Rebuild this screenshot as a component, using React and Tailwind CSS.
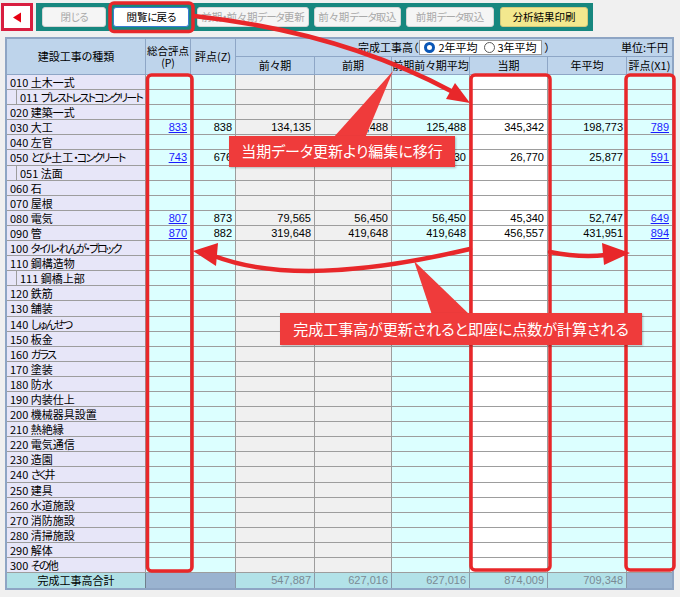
import React from "react";

const rows = [
  ["010", "土木一式"],
  ["011", "プレストレストコンクリート", true],
  ["020", "建築一式"],
  ["030", "大工"],
  ["040", "左官"],
  ["050", "とび・土工・コンクリート"],
  ["051", "法面", true],
  ["060", "石"],
  ["070", "屋根"],
  ["080", "電気"],
  ["090", "管"],
  ["100", "タイル・れんが・ブロック"],
  ["110", "鋼構造物"],
  ["111", "鋼橋上部", true],
  ["120", "鉄筋"],
  ["130", "舗装"],
  ["140", "しゅんせつ"],
  ["150", "板金"],
  ["160", "ガラス"],
  ["170", "塗装"],
  ["180", "防水"],
  ["190", "内装仕上"],
  ["200", "機械器具設置"],
  ["210", "熱絶縁"],
  ["220", "電気通信"],
  ["230", "造園"],
  ["240", "さく井"],
  ["250", "建具"],
  ["260", "水道施設"],
  ["270", "消防施設"],
  ["280", "清掃施設"],
  ["290", "解体"],
  ["300", "その他"],
];

const data = {
  "030": { p: "833", z: "838", v: ["134,135", "125,488", "125,488", "345,342", "198,773"], x: "789" },
  "050": { p: "743", z: "676", v: ["25,283", "24,977", "25,130", "26,770", "25,877"], x: "591" },
  "080": { p: "807", z: "873", v: ["79,565", "56,450", "56,450", "45,340", "52,747"], x: "649" },
  "090": { p: "870", z: "882", v: ["319,648", "419,648", "419,648", "456,557", "431,951"], x: "894" },
};

const jp = "font-['Noto_Sans_CJK_JP',sans-serif] [font-feature-settings:'palt']";
const num = "font-['Liberation_Sans','Noto_Sans_CJK_JP',sans-serif]";
const cell = "shrink-0 h-full border-r border-b border-[#9d9d9d] text-right pr-[3px] leading-[14px]";

// the old UI font draws kana much narrower than kanji
function Narrow({ text, tight = "tracking-[-1.8px]" }) {
  const parts = text.split(/([\u3040-\u30ff\u30fb]+)/);
  return parts.map((p, i) =>
    /[\u3040-\u30ff]/.test(p) ? (
      <span key={i} className={tight}>
        {p}
      </span>
    ) : (
      <span key={i}>{p}</span>
    )
  );
}

function Btn({ children, w, active, print }) {
  let tone = "border-[#d6d6d6] bg-[#f5f5f5] text-[#a9a9a9]";
  if (active) tone = "border-[#3b7bd4] bg-white text-black";
  if (print) tone = "border-[#d3c97c] bg-[#f3e88e] text-black";
  return (
    <div className={`${w} h-[20px] shrink-0 rounded-[3px] border ${tone} flex items-center justify-center whitespace-nowrap text-[10.5px] ${jp}`}>
      <Narrow text={children} tight="tracking-[-1px]" />
    </div>
  );
}

function DataRow({ code, name, sub }) {
  const d = data[code];
  const link = "text-[#1a1aff] underline";
  return (
    <div className={`flex h-[15.1px] text-[11px] ${num}`}>
      <div className={`w-[139px] shrink-0 h-full overflow-hidden whitespace-nowrap border-r border-b border-[#9d9d9d] bg-[#e7e6f8] leading-[14px] ${jp}`}>
        {sub ? (
          <div className="ml-[9px] h-full border-l border-[#9d9d9d] pl-[3px]">
            {code} <Narrow text={name} />
          </div>
        ) : (
          <div className="pl-[3px]">
            {code} <Narrow text={name} />
          </div>
        )}
      </div>
      <div className={`w-[45px] bg-[#dcffff] ${cell}`}>{d && <span className={link}>{d.p}</span>}</div>
      <div className={`w-[45px] bg-[#dcffff] ${cell}`}>{d && d.z}</div>
      <div className={`w-[79px] bg-[#f0f0f0] ${cell}`}>{d && d.v[0]}</div>
      <div className={`w-[77px] bg-[#f0f0f0] ${cell}`}>{d && d.v[1]}</div>
      <div className={`w-[78px] bg-[#dcffff] ${cell}`}>{d && d.v[2]}</div>
      <div className={`w-[78px] bg-white ${cell}`}>{d && d.v[3]}</div>
      <div className={`w-[79px] bg-[#dcffff] ${cell}`}>{d && d.v[4]}</div>
      <div className={`w-[45px] bg-[#dcffff] ${cell} border-r-0`}>{d && <span className={link}>{d.x}</span>}</div>
    </div>
  );
}

function Overlay() {
  const red = "#e8272a";
  return (
    <svg className="absolute left-0 top-0 pointer-events-none" width="680" height="597" viewBox="0 0 680 597">
      <g fill="none" stroke={red} strokeWidth="3.5">
        <rect x="110" y="3" width="83" height="28.5" rx="4" />
        <rect x="147.5" y="75" width="44.5" height="496" rx="4" />
        <rect x="471" y="75" width="79" height="495" rx="4" />
        <rect x="626" y="75" width="48" height="495" rx="4" />
      </g>
      <g fill="none" stroke={red} strokeWidth="4.5" strokeLinecap="round">
        <path d="M194,16 Q340,32 451,91" />
        <path d="M470,249 Q300,289 214,256" />
        <path d="M550,252 Q580,258 606,255" />
      </g>
      <g fill={red}>
        <polygon points="470,103 446,99 455,83" />
        <polygon points="193,251 218,243 216,266" />
        <polygon points="630,253 602,243 604,265" />
      </g>
      <g fill="#ef3b3b">
        <polygon points="393,71 333,138 365,138" />
        <polygon points="414,261 432,315 470,315" />
      </g>
    </svg>
  );
}

export default function App() {
  return (
    <div className={`relative w-[680px] h-[597px] overflow-hidden bg-[#f0f0f0] text-black ${jp}`}>
      <div className="flex h-[28px] mt-[3px]">
        <div className="ml-[1px] w-[32px] h-[28px] border-[3px] border-[#d81e40] bg-white flex items-center justify-center">
          <svg width="10" height="11" viewBox="0 0 10 11">
            <polygon points="1,5.5 9,0.5 9,10.5" fill="#e60012" />
          </svg>
        </div>
        <div className="ml-[3px] w-[557px] h-[28px] bg-[#17877f] flex items-center pl-[6px]">
          <Btn w="w-[64px]">閉じる</Btn>
          <div className="ml-[7px]">
            <Btn w="w-[76px]" active>閲覧に戻る</Btn>
          </div>
          <div className="ml-[8px]">
            <Btn w="w-[112px]">前期・前々期データ更新</Btn>
          </div>
          <div className="ml-[5px]">
            <Btn w="w-[87px]">前々期データ取込</Btn>
          </div>
          <div className="ml-[5px]">
            <Btn w="w-[88px]">前期データ取込</Btn>
          </div>
          <div className="ml-[6px]">
            <Btn w="w-[88px]" print>分析結果印刷</Btn>
          </div>
        </div>
      </div>

      <div className="mt-[6px] ml-[5px] w-[669px] border-2 border-[#8ea5c4] bg-[#f0f0f0]">
        <div className="flex h-[36px] bg-[#bed4eb] text-[11px] leading-[13px]">
          <div className="w-[139px] shrink-0 border-r border-b border-[#8ea6c6] flex items-center justify-center">
            建設工事の種類
          </div>
          <div className="w-[45px] shrink-0 border-r border-b border-[#8ea6c6] flex flex-col items-center justify-center text-[10.5px] leading-[12px]">
            <span>総合評点</span>
            <span>(P)</span>
          </div>
          <div className="w-[45px] shrink-0 border-r border-b border-[#8ea6c6] flex items-center justify-center">
            評点(Z)
          </div>
          <div className="w-[436px] shrink-0 flex flex-col">
            <div className="h-[18px] border-b border-[#8ea6c6] grid grid-cols-[1fr_auto_1fr] items-center">
              <div />
              <div className="flex items-center">
                <span>完成工事高（</span>
                <div className="ml-[1px] h-[15px] flex items-center bg-white border border-[#9a9a9a] px-[4px] gap-[3px]">
                  <span className="w-[11px] h-[11px] rounded-full border-[3px] border-[#0a56b6] bg-white" />
                  <span className="mr-[3px]">2年平均</span>
                  <span className="w-[11px] h-[11px] rounded-full border border-[#5a5a5a] bg-white" />
                  <span>3年平均</span>
                </div>
                <span className="ml-[3px]">）</span>
              </div>
              <div className="justify-self-end pr-[4px]">単位:千円</div>
            </div>
            <div className="flex h-[18px]">
              <div className="w-[79px] shrink-0 border-r border-b border-[#8ea6c6] flex items-center justify-center">前々期</div>
              <div className="w-[77px] shrink-0 border-r border-b border-[#8ea6c6] flex items-center justify-center">前期</div>
              <div className="w-[78px] shrink-0 border-r border-b border-[#8ea6c6] flex items-center justify-center">前期前々期平均</div>
              <div className="w-[78px] shrink-0 border-r border-b border-[#8ea6c6] flex items-center justify-center">当期</div>
              <div className="w-[79px] shrink-0 border-r border-b border-[#8ea6c6] flex items-center justify-center">年平均</div>
              <div className="w-[45px] shrink-0 border-b border-[#8ea6c6] flex items-center justify-center">評点(X1)</div>
            </div>
          </div>
        </div>

        {rows.map(([code, name, sub]) => (
          <DataRow key={code} code={code} name={name} sub={sub} />
        ))}

        <div className={`flex h-[15px] text-[11px] leading-[14px] ${num}`}>
          <div className={`w-[139px] shrink-0 border-r border-[#6f7f8c] bg-[#b0e0e6] text-center ${jp}`}>完成工事高合計</div>
          <div className="w-[90px] shrink-0 bg-[#9ab3d0] border-r border-[#8a9aa8]" />
          {["547,887", "627,016", "627,016", "874,009", "709,348"].map((v, i) => (
            <div
              key={i}
              className={`${["w-[79px]", "w-[77px]", "w-[78px]", "w-[78px]", "w-[79px]"][i]} shrink-0 bg-[#b2e2e8] border-r border-[#8a9aa8] text-right pr-[3px] text-[#7a8a94]`}
            >
              {v}
            </div>
          ))}
          <div className="w-[45px] shrink-0 bg-[#9ab3d0]" />
        </div>
      </div>

      <Overlay />

      <div className="absolute left-[229px] top-[136px] w-[226px] h-[31px] bg-[#ef3b3b] flex items-center justify-center text-white text-[15px] shadow-[1px_1px_2px_rgba(0,0,0,0.25)]">
        当期データ更新より編集に移行
      </div>
      <div className="absolute left-[280px] top-[313px] w-[362px] h-[32px] bg-[#ef3b3b] flex items-center justify-center text-white text-[15px] shadow-[1px_1px_2px_rgba(0,0,0,0.25)]">
        完成工事高が更新されると即座に点数が計算される
      </div>
    </div>
  );
}
